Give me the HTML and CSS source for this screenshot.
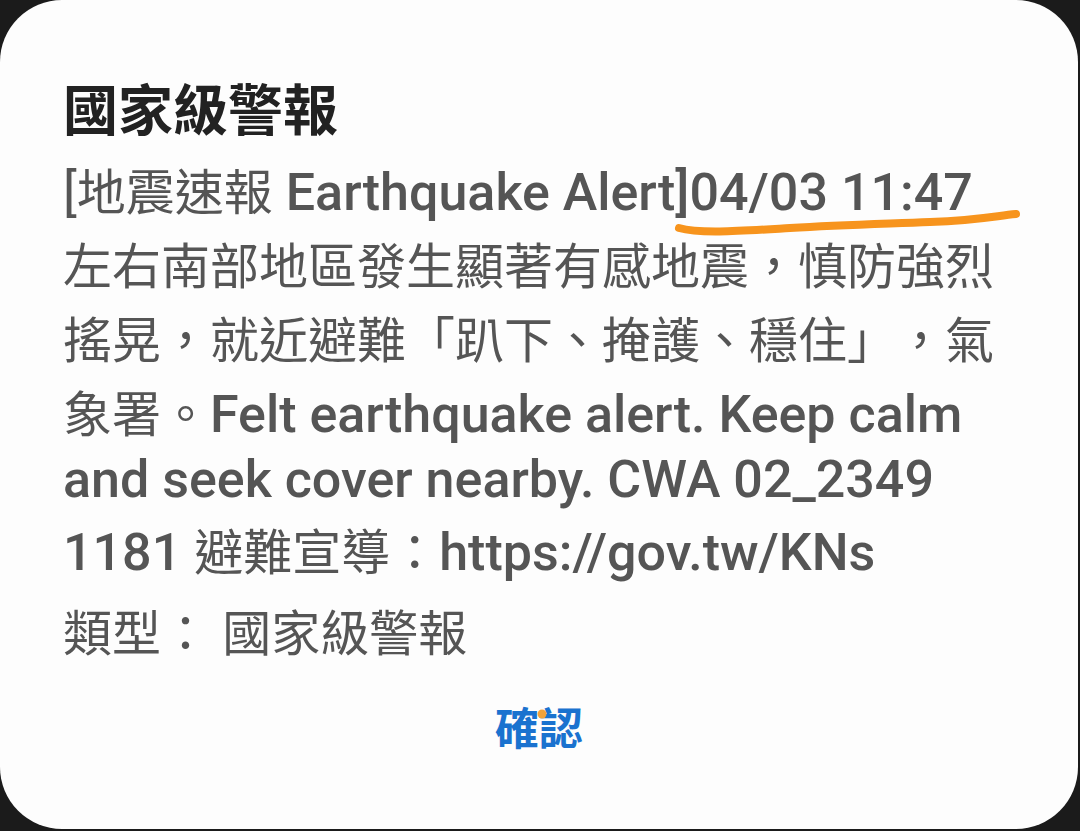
FILE: index.html
```html
<!DOCTYPE html>
<html lang="zh-Hant">
<head>
  <meta charset="UTF-8" />
  <meta name="viewport" content="width=device-width, initial-scale=1" />
  <title>國家級警報</title>
  <link rel="stylesheet" href="styles.css">
</head>
<body>

<div class="dialog" role="alertdialog" aria-labelledby="alertTitle">
  <h1 class="title" id="alertTitle">國家級警報</h1>

  <p class="message">[<span class="zh">地震速報</span><b> Earthquake Alert]04/03 11:47</b><br>
    <span class="zh">左右南部地區發生顯著有感地震，慎防強烈</span><br>
    <span class="zh">搖晃，就近避難「趴下、掩護、穩住」，氣</span><br>
    <span class="zh">象署。</span><b>Felt earthquake alert. Keep calm</b><br>
    <b>and seek cover nearby. CWA 02_2349</b><br>
    <b>1181 </b><span class="zh">避難宣導：</span><b>https://gov.tw/KNs</b></p>

  <p class="type">類型： 國家級警報</p>

  <div class="actions">
    <button class="confirm">確認</button>
  </div>

  <!-- 手繪標記 -->
  <svg class="marks" viewBox="0 0 1078 829" aria-hidden="true">
    <path d="M679 228 C 700 234, 740 231, 790 228 S 880 224, 930 222 S 995 216, 1016 214" />
    <circle cx="542" cy="714" r="4.5" />
  </svg>
</div>

</body>
</html>
```

FILE: styles.css
```css
body {
  margin: 0;
  background: #1b1b1b;
  font-family: Roboto, "Noto Sans CJK TC", sans-serif;
}
.dialog {
  position: relative;
  width: 1078px;
  height: 829px;
  box-sizing: border-box;
  padding: 74px 63px 0;
  background: #fdfdfd;
  border-radius: 62px;
  overflow: hidden;
  text-spacing-trim: space-all;
}
.title {
  margin: 0;
  font-family: "Noto Sans CJK TC", sans-serif;
  font-size: 55px;
  font-weight: 700;
  line-height: 65px;
  color: #222;
}
.message {
  margin: 13px 0 0;
  font-size: 52px;
  line-height: 64px;
  color: #555;
}
.message b {
  font-weight: 500;
}
.zh {
  font-family: "Noto Sans CJK TC", sans-serif;
  font-size: 49px;
  line-height: 74px;
}
.type {
  margin: 12px 0 0;
  font-family: Roboto, "Noto Sans CJK TC", sans-serif;
  font-size: 49px;
  line-height: 74px;
  color: #555;
}
.actions {
  margin-top: 24px;
  text-align: center;
}
.confirm {
  padding: 0;
  border: none;
  background: none;
  font-family: "Noto Sans CJK TC", sans-serif;
  font-size: 44px;
  font-weight: 700;
  line-height: 60px;
  color: #1a72cf;
  cursor: pointer;
}
.marks {
  position: absolute;
  left: 0;
  top: 0;
  width: 1078px;
  height: 829px;
  pointer-events: none;
}
.marks path {
  fill: none;
  stroke: #f7941d;
  stroke-width: 8;
  stroke-linecap: round;
}
.marks circle {
  fill: #f3a23a;
}
```
